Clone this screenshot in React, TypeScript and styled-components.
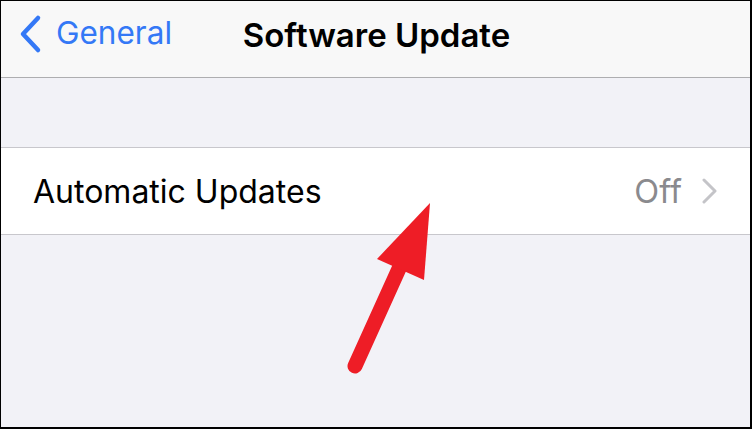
import styled, { createGlobalStyle } from 'styled-components'

const GlobalStyle = createGlobalStyle`
  html, body {
    margin: 0;
    padding: 0;
    background: #ffffff;
  }
  * {
    box-sizing: border-box;
  }
`

const BackChevron = () => (
  <svg width="26" height="40" viewBox="0 0 26 40">
    <path
      d="M21 4 L6 20 L21 36"
      fill="none"
      stroke="#3478f6"
      strokeWidth="4.5"
      strokeLinecap="round"
      strokeLinejoin="round"
    />
  </svg>
)

const Disclosure = () => (
  <svg width="18" height="26" viewBox="0 0 18 26">
    <path
      d="M3 2 L14 13 L3 24"
      fill="none"
      stroke="#c4c4c8"
      strokeWidth="3"
      strokeLinecap="round"
      strokeLinejoin="round"
    />
  </svg>
)

const Pointer = () => (
  <svg width="752" height="429" viewBox="0 0 752 429">
    <line
      x1="355"
      y1="366"
      x2="402"
      y2="262"
      stroke="#ee1d26"
      strokeWidth="15"
      strokeLinecap="round"
    />
    <polygon points="430,203 377,259 424,280" fill="#ee1d26" />
  </svg>
)

const App = () => {
  return (
    <>
      <GlobalStyle />
      <Frame>
        <NavBar>
          <BackButton>
            <BackChevron />
            <BackLabel>General</BackLabel>
          </BackButton>
          <Title>Software Update</Title>
        </NavBar>
        <Spacer />
        <Group>
          <Cell>
            <CellLabel>Automatic Updates</CellLabel>
            <CellDetail>
              <DetailText>Off</DetailText>
              <Disclosure />
            </CellDetail>
          </Cell>
        </Group>
        <Filler />
        <Overlay>
          <Pointer />
        </Overlay>
      </Frame>
    </>
  )
}

const Frame = styled.div`
  position: relative;
  width: 752px;
  height: 429px;
  display: flex;
  flex-direction: column;
  border-style: solid;
  border-color: #000;
  border-width: 1px 2px 2px 1px;
  background: #f2f2f7;
  overflow: hidden;
  font-family: Inter, 'Liberation Sans', sans-serif;
`

const NavBar = styled.header`
  position: relative;
  height: 77px;
  flex-shrink: 0;
  display: flex;
  align-items: center;
  justify-content: center;
  background: #f8f8f8;
  border-bottom: 1px solid #aeaeb0;
`

const BackButton = styled.div`
  position: absolute;
  left: 16px;
  top: 13px;
  display: flex;
  align-items: center;
  gap: 13px;
`

const BackLabel = styled.span`
  color: #3478f6;
  font-size: 31.5px;
  margin-top: -3px;
`

const Title = styled.h1`
  margin: -9px 0 0 2px;
  font-size: 33px;
  font-weight: 600;
  color: #000;
`

const Spacer = styled.div`
  height: 69px;
  flex-shrink: 0;
`

const Group = styled.section`
  background: #fff;
  border-top: 1px solid #c8c7cc;
  border-bottom: 1px solid #c8c7cc;
`

const Cell = styled.div`
  height: 86px;
  display: flex;
  align-items: center;
  justify-content: space-between;
  padding: 0 31px 0 32px;
`

const CellLabel = styled.span`
  font-size: 32px;
  color: #000;
`

const CellDetail = styled.div`
  display: flex;
  align-items: center;
  gap: 19px;
`

const DetailText = styled.span`
  font-size: 32.5px;
  color: #8a8a8e;
`

const Filler = styled.div`
  flex: 1;
`

const Overlay = styled.div`
  position: absolute;
  left: -1px;
  top: -1px;
  pointer-events: none;
`

export default App
